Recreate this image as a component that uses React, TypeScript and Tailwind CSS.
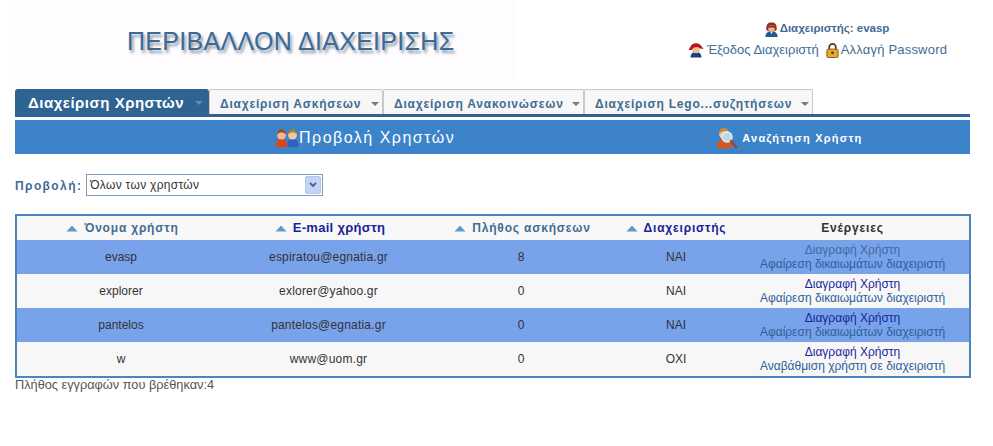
const font = { fontFamily: '"Liberation Sans", Arial, sans-serif' };

function Admin({ className = '' }: { className?: string }) {
  return (
    <svg viewBox="0 0 16 16" className={className}>
      <path d="M1.500 16c0-4 2.500-6.500 6.500-6.500s6.500 2.500 6.500 6.500z" fill="#27558f" />
      <path d="M6.500 10h3L8 13z" fill="#e8e8f0" />
      <path d="M2.500 8C2 2.500 4.500.5 8 .5s6 2 5.500 7.500l-1.500 1.500H4z" fill="#8a2f22" />
      <circle cx="8" cy="6.800" r="3.500" fill="#f0b98a" />
      <path d="M4.200 6.500C4.500 4.500 6 3.500 8 3.500s3.500 1 3.800 3C10 5.500 6 5.500 4.200 6.500z" fill="#8a2f22" />
    </svg>
  );
}

function Exit({ className = '' }: { className?: string }) {
  return (
    <svg viewBox="0 0 16 16" className={className}>
      <path d="M2.500 15.500c0-3.500 2-5.500 5.500-5.500s5.500 2 5.500 5.500z" fill="#1d3f7c" />
      <circle cx="8" cy="7.500" r="3.800" fill="#f2c08f" />
      <path d="M.5 8 3.500 3C6 .5 10 .5 12.500 3L15.500 7l-3.500-.5-2-1.500-4 .5-2.500 2.500z" fill="#b3181c" />
    </svg>
  );
}

function Lock({ className = '' }: { className?: string }) {
  return (
    <svg viewBox="0 0 16 16" className={className}>
      <path d="M4.500 7V4.500a3.500 3.500 0 0 1 7 0V7" fill="none" stroke="#4a3a20" strokeWidth="1.800" />
      <rect x="2" y="6.500" width="12" height="9" rx="1.500" fill="#e9a92c" stroke="#7a5a18" />
      <circle cx="8" cy="10.500" r="1.500" fill="#5a3a10" />
    </svg>
  );
}

function Users({ className = '' }: { className?: string }) {
  return (
    <svg viewBox="0 0 24 18" className={className}>
      <path d="M12 18c0-5 1.500-8 5.500-8s6 3 6 8z" fill="#2f5fc0" />
      <circle cx="17.500" cy="6" r="4.500" fill="#f1c99d" />
      <path d="M13 6c0-3.500 2-5.500 4.500-5.500S22 2.500 22 6c-1-1.800-2.700-2.800-4.500-2.800S14 4.200 13 6z" fill="#b87a2c" />
      <path d="M.5 18c0-5 1.500-8 6-8s6 3 6 8z" fill="#d9481c" />
      <circle cx="6.500" cy="6" r="4.500" fill="#f1b98d" />
      <path d="M2 6c0-3.500 2-5.500 4.500-5.500S11 2.500 11 6c-1-1.800-2.700-2.800-4.500-2.800S3 4.200 2 6z" fill="#a8451a" />
    </svg>
  );
}

function SearchUser({ className = '' }: { className?: string }) {
  return (
    <svg viewBox="0 0 22 22" className={className}>
      <path d="M1 21.500c0-6 2-9.500 7-9.500s7 3.500 7 9.500z" fill="#d4581f" />
      <circle cx="8" cy="7" r="5" fill="#f2c9a2" />
      <path d="M3 7c0-4 2-6 5-6s4 1.500 4.500 3.500C10 3.500 6 4 3 7z" fill="#c98a3c" />
      <circle cx="11" cy="10" r="5" fill="#bcd6ee" stroke="#e8eef5" strokeWidth="1.400" />
      <path d="m15 14 5 6" stroke="#a8431a" strokeWidth="2.400" strokeLinecap="round" />
    </svg>
  );
}

function SortArrow() {
  return (
    <svg viewBox="0 0 12 7" className="h-[7px] w-3 shrink-0">
      <path d="M6 .5 11.500 6.500H.5z" fill="#5b9bd0" />
    </svg>
  );
}

function TabCaret({ light = false }: { light?: boolean }) {
  return (
    <svg viewBox="0 0 8 4" className="h-1 w-2 shrink-0">
      <path d="M0 0h8L4 4z" fill={light ? '#5f8cb0' : '#77797c'} />
    </svg>
  );
}

const rows = [
  { name: 'evasp', email: 'espiratou@egnatia.gr', count: '8', admin: 'ΝΑΙ', action: 'Αφαίρεση δικαιωμάτων διαχειριστή', del: 'text-[#3f6ba3]' },
  { name: 'explorer', email: 'exlorer@yahoo.gr', count: '0', admin: 'ΝΑΙ', action: 'Αφαίρεση δικαιωμάτων διαχειριστή', del: 'text-[#1a1fa0]' },
  { name: 'pantelos', email: 'pantelos@egnatia.gr', count: '0', admin: 'ΝΑΙ', action: 'Αφαίρεση δικαιωμάτων διαχειριστή', del: 'text-[#1a1fa0]' },
  { name: 'w', email: 'www@uom.gr', count: '0', admin: 'ΟΧΙ', action: 'Αναβάθμιση χρήστη σε διαχειριστή', del: 'text-[#1a1fa0]' },
];

const tabs = [
  { label: 'Διαχείριση Ασκήσεων', w: 'w-[174px]' },
  { label: 'Διαχείριση Ανακοινώσεων', w: 'w-[201px]' },
  { label: 'Διαχείριση Lego...συζητήσεων', w: 'w-[229px]' },
];

const grid = 'grid grid-cols-[208px_207px_178px_132px_1fr]';

export default function App() {
  return (
    <div className="h-[446px] w-[993px] overflow-hidden bg-white px-[15px]" style={font}>
      <header className="flex h-[89px] items-start">
        <div className="flex h-[82px] w-[500px] shrink-0 items-center bg-[#fefcfe] pl-[112px]">
          <h1 className="whitespace-nowrap text-[25px] leading-none tracking-[0.3px] text-[#3a6a96] [text-shadow:2px_3px_3px_#8b97a6]">
            ΠΕΡΙΒΑΛΛΟΝ ΔΙΑΧΕΙΡΙΣΗΣ
          </h1>
        </div>
        <div className="ml-[173px] flex w-[259px] flex-col items-center pt-[21px] text-[#3f6d93]">
          <div className="ml-[18px] flex h-4 items-center whitespace-nowrap text-[11.500px] font-bold">
            <Admin className="mr-px h-[15px] w-[15px]" />
            Διαχειριστής: evasp
          </div>
          <div className="mt-[5px] flex h-4 items-center whitespace-nowrap text-[13px]">
            <Exit className="mr-[3px] h-4 w-4" />
            Έξοδος Διαχειριστή
            <Lock className="ml-[6px] mr-px h-[15px] w-[15px]" />
            <span className="tracking-[0.2px]">Αλλαγή Password</span>
          </div>
        </div>
      </header>

      <nav className="flex h-[25px] w-[955px] items-stretch">
        <div className="flex w-[194px] shrink-0 items-center justify-between rounded-t-[3px] bg-[#2f6391] pl-[13px] pr-[6px] pt-[3px] text-[15px] font-bold tracking-[0.5px] text-white">
          Διαχείριση Χρηστών
          <TabCaret light />
        </div>
        {tabs.map((t) => (
          <div
            key={t.label}
            className={`${t.w} flex shrink-0 items-center justify-between whitespace-nowrap rounded-t-[2px] border border-b-0 border-[#c9c9c9] bg-[#f7f7f7] pl-[10px] pr-[3px] pt-[3px] text-[12px] font-bold tracking-[0.8px] text-[#3f6d93]`}
          >
            {t.label}
            <TabCaret />
          </div>
        ))}
      </nav>
      <div className="h-[3px] w-[955px] bg-[#2f6391]" />
      <div className="mt-[3px] flex h-[34px] w-[955px] items-center bg-[#3c83ca] pt-[2px] text-white">
        <div className="ml-[260px] flex items-center text-[16px] tracking-[1.500px]">
          <Users className="h-[18px] w-6" />
          Προβολή Χρηστών
        </div>
        <div className="ml-[261px] flex items-center text-[11px] font-bold tracking-[1.200px]">
          <SearchUser className="mr-[4px] h-[22px] w-[22px]" />
          Αναζήτηση Χρήστη
        </div>
      </div>

      <div className="mt-5 flex h-[22px] items-center">
        <span className="mr-1 pt-px text-[12px] font-bold tracking-[1.400px] text-[#3f6d93]">Προβολή:</span>
        <div className="flex h-[22px] w-[237px] items-center justify-between border border-[#7f9db9] bg-white pl-[3px] pr-px text-[12px] tracking-[0.3px] text-[#333]">
          Όλων των χρηστών
          <div className="flex h-[18px] w-4 items-center justify-center rounded-[2px] border border-[#b4c6ea] bg-[#c3d3f5]">
            <svg viewBox="0 0 8 6" className="h-[6px] w-2">
              <path d="M1 1 4 4 7 1" fill="none" stroke="#4d6185" strokeWidth="1.800" />
            </svg>
          </div>
        </div>
      </div>

      <div className="mt-[18px] w-[956px] border-2 border-[#4a86bb]">
        <div className={`${grid} h-6 items-center bg-[#f8f8f8] text-[12px] font-bold tracking-[0.8px]`}>
          <div className="flex items-center justify-center gap-[6px] pl-[3px] text-[#3f6d93]"><SortArrow />Όνομα χρήστη</div>
          <div className="flex items-center justify-center gap-[6px] pl-[3px] text-[13px] tracking-[0.3px] text-[#1a1f9a]"><SortArrow />E-mail χρήστη</div>
          <div className="flex items-center justify-center gap-[6px] pl-[3px] text-[#3f6d93]"><SortArrow />Πλήθος ασκήσεων</div>
          <div className="flex items-center justify-center gap-[6px] text-[#1a1f9a]"><SortArrow />Διαχειριστής</div>
          <div className="pr-[6px] text-center text-[#333]">Ενέργειες</div>
        </div>
        {rows.map((r, i) => (
          <div
            key={r.name}
            className={`${grid} h-[34px] items-center text-center text-[12px] text-[#333] ${i % 2 === 0 ? 'bg-[#78a2ea]' : 'bg-[#f7f7f7]'}`}
          >
            <div>{r.name}</div>
            <div className="tracking-[0.2px]">{r.email}</div>
            <div>{r.count}</div>
            <div>{r.admin}</div>
            <div className="whitespace-nowrap pr-[6px] leading-[14px]">
              <div className={r.del}>Διαγραφή Χρήστη</div>
              <div className="text-[#2f5f9a]">{r.action}</div>
            </div>
          </div>
        ))}
      </div>
      <p className="text-[12.750px] leading-[14px] text-[#555]">Πλήθος εγγραφών που βρέθηκαν:4</p>
    </div>
  );
}
